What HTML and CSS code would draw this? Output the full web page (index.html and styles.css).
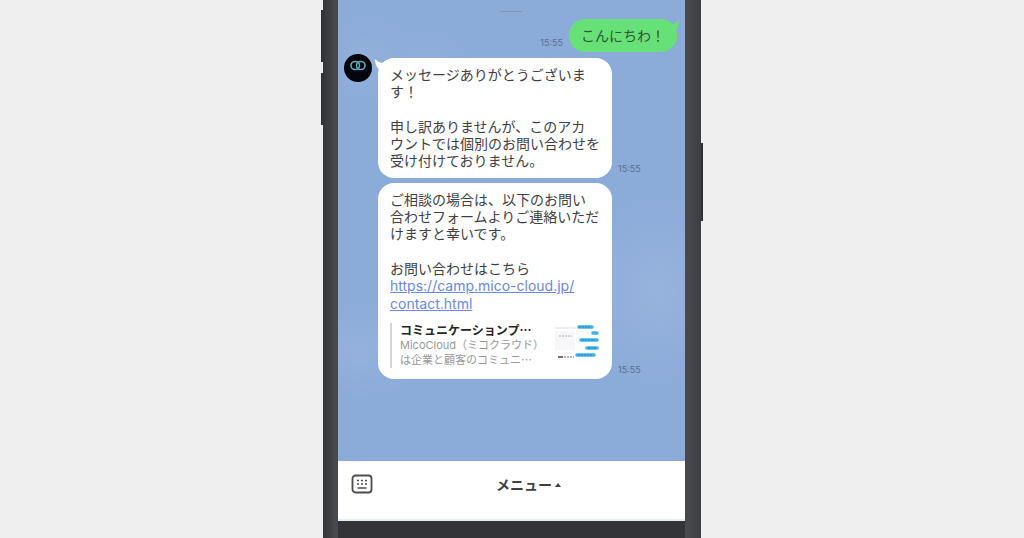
FILE: index.html
```html
<!DOCTYPE html>
<html lang="ja">
<head>
  <meta charset="UTF-8">
  <meta name="viewport" content="width=device-width, initial-scale=1">
  <title>トーク</title>
  <link rel="stylesheet" href="styles.css">
</head>
<body>
  <div class="phone">
    <span class="side-key volume-up"></span>
    <span class="side-key volume-down"></span>
    <span class="side-key power"></span>

    <div class="screen">
      <main class="chat">
        <div class="handle"></div>

        <div class="row sent">
          <time class="time">15:55</time>
          <div class="bubble bubble-green">
            こんにちわ！
            <svg class="tail tail-right" viewBox="0 0 12 12" aria-hidden="true"><path d="M0 3C4 5 8 4 12 0C12 5 10 9 7 11Z" fill="#67e177"/></svg>
          </div>
        </div>

        <div class="received">
          <svg class="avatar" viewBox="0 0 28 28" aria-hidden="true">
            <circle cx="14" cy="14" r="14" fill="#02060c"/>
            <rect x="7" y="7.500" width="8.500" height="8" rx="4" fill="none" stroke="#5cacb9" stroke-width="1.600"/>
            <rect x="12.500" y="7.500" width="8.500" height="8" rx="4" fill="none" stroke="#5cacb9" stroke-width="1.600"/>
          </svg>
          <div class="messages">
            <div class="row">
              <div class="bubble">
                <svg class="tail tail-left" viewBox="0 0 12 12" aria-hidden="true"><path d="M12 3C8 5 4 4 0 0C0 5 2 9 5 11Z" fill="#fff"/></svg>
                <p>メッセージありがとうございま<br>す！</p>
                <p>申し訳ありませんが、このアカ<br>ウントでは個別のお問い合わせを<br>受け付けておりません。</p>
              </div>
              <time class="time">15:55</time>
            </div>

            <div class="row">
              <div class="bubble">
                <p>ご相談の場合は、以下のお問い<br>合わせフォームよりご連絡いただ<br>けますと幸いです。</p>
                <p>お問い合わせはこちら</p>
                <a class="link" href="https://camp.mico-cloud.jp/contact.html">https://camp.mico-cloud.jp/<br>contact.html</a>
                <div class="preview">
                  <div class="preview-text">
                    <div class="preview-title">コミュニケーションプ<span class="dots">…</span></div>
                    <div class="preview-desc">MicoCloud（ミコクラウド）<br>は企業と顧客のコミュニ<span class="dots">…</span></div>
                  </div>
                  <svg class="thumb" viewBox="0 0 46 40" aria-hidden="true">
                    <path d="M1 5H22M2 18H20M2 23H20" stroke="#ededf0" stroke-width="2"/>
                    <rect x="1" y="8" width="20" height="19" fill="#f7f7f9"/>
                    <path d="M5 13H18" stroke="#a9abb0" stroke-width="1" stroke-dasharray="2 1"/>
                    <path d="M4 34H9" stroke="#70757c" stroke-width="2"/>
                    <path d="M10 34H20" stroke="#b4b7bb" stroke-width="2" stroke-dasharray="2 1"/>
                    <g stroke="#3fb2ec" stroke-width="3.600" stroke-linecap="round">
                      <path d="M25 4H38M39 10H43M27 17H43M33 25H43M23 32H40"/>
                    </g>
                    <path d="M25 4H37M28 17H41M34 25H42M24 32H38" stroke="#1b83c0" stroke-width="1" stroke-dasharray="2 1"/>
                  </svg>
                </div>
              </div>
              <time class="time">15:55</time>
            </div>
          </div>
        </div>
      </main>

      <footer class="menu-bar">
        <button class="keyboard" type="button" aria-label="キーボード">
          <svg viewBox="0 0 22 20" aria-hidden="true">
            <rect x="1.500" y="1.500" width="19" height="17" rx="3" fill="none" stroke="#4c4c4c" stroke-width="1.800"/>
            <path d="M6 6.500H8M10 6.500H12M14 6.500H16M6 10H8M10 10H12M14 10H16M6.500 14H15.500" stroke="#4c4c4c" stroke-width="1.700"/>
          </svg>
        </button>
        <button class="menu" type="button">メニュー<span class="arrow"></span></button>
      </footer>
    </div>
  </div>
</body>
</html>
```
FILE: styles.css
```css
* {
  box-sizing: border-box;
}
body {
  margin: 0;
  background: #efefef;
  font-family: Inter, "Noto Sans CJK JP", sans-serif;
  font-size: 14px;
  line-height: 17px;
  color: #3f4043;
}
p {
  margin: 0;
}
p + p {
  margin-top: 18px;
}
button {
  border: none;
  padding: 0;
  background: none;
  color: inherit;
  font: inherit;
  cursor: pointer;
}

/* phone body */
.phone {
  position: relative;
  display: flex;
  width: 100%;
  max-width: 378px;
  min-height: 100vh;
  margin: 0 auto;
  padding: 0 16px 17px 15px;
  background: linear-gradient(90deg, #34363b, #47494e 12px, #47494e 366px, #3c3d42);
}
.phone::after {
  content: "";
  position: absolute;
  left: 15px;
  right: 16px;
  bottom: 0;
  height: 17px;
  background: #333438;
}
.side-key {
  position: absolute;
  width: 2px;
  height: 52px;
  background: #303136;
}
.volume-up {
  top: 10px;
  left: -2px;
}
.volume-down {
  top: 73px;
  left: -2px;
}
.power {
  top: 143px;
  right: -2px;
  height: 78px;
}
.screen {
  flex: 1;
  display: flex;
  flex-direction: column;
  min-width: 0;
}

/* talk area with faint clouds */
.chat {
  flex: 1;
  padding: 11px 8px 80px 6px;
  background:
    radial-gradient(ellipse 54px 46px at 30px 58px, rgba(255, 255, 255, 0.06), transparent),
    radial-gradient(ellipse 40px 36px at 92px 60px, rgba(255, 255, 255, 0.05), transparent),
    radial-gradient(ellipse 80px 100px at 320px 290px, rgba(255, 255, 255, 0.1), transparent),
    radial-gradient(ellipse 80px 50px at 20px 350px, rgba(255, 255, 255, 0.08), transparent),
    #8babd9;
}
.handle {
  width: 22px;
  height: 1px;
  margin: 0 auto;
  background: #7c94b9;
}
.row {
  display: flex;
  align-items: flex-end;
  gap: 6px;
}
.sent {
  justify-content: flex-end;
  margin-top: 7px;
}
.time {
  padding-bottom: 1px;
  font-size: 9px;
  line-height: 16px;
  color: #5b6f90;
}
.received {
  display: flex;
  gap: 6px;
  margin-top: 6px;
}
.avatar {
  flex: none;
  width: 28px;
  height: 28px;
  margin-top: -4px;
}
.messages {
  display: flex;
  flex-direction: column;
  gap: 5px;
}
.bubble {
  position: relative;
  width: 234px;
  padding: 8px 12px 9px;
  border-radius: 16px;
  background: #fff;
}
.bubble-green {
  width: auto;
  padding: 8px 12px;
  background: #67e177;
  color: #2b5738;
}
.tail {
  position: absolute;
  width: 12px;
  height: 12px;
}
.tail-left {
  top: 1px;
  left: -3px;
}
.tail-right {
  top: 1px;
  right: -2px;
}
.link {
  display: block;
  line-height: 18px;
  color: #6b87e8;
}

/* link preview */
.preview {
  display: flex;
  justify-content: space-between;
  margin-top: 10px;
  padding-bottom: 2px;
}
.preview-text {
  padding-left: 8px;
  border-left: 2px solid #d5d5d7;
  line-height: 15px;
  white-space: nowrap;
}
.preview-title {
  font-size: 12px;
  font-weight: bold;
  color: #252525;
}
.preview-desc {
  font-size: 11px;
  color: #98999b;
}
.dots {
  font-family: "Noto Sans CJK JP", sans-serif;
  line-height: 1;
}
.thumb {
  flex: none;
  width: 46px;
  height: 40px;
}

/* bottom menu */
.menu-bar {
  display: flex;
  align-items: flex-start;
  height: 60px;
  padding: 12px 0 12px 13px;
  border-bottom: 2px solid #e4edf2;
  background: #fff;
}
.keyboard {
  flex: none;
  width: 22px;
  height: 22px;
}
.keyboard svg {
  display: block;
  width: 22px;
  height: 22px;
}
.menu {
  flex: 1;
  display: flex;
  justify-content: center;
  align-items: center;
  gap: 3px;
  padding-right: 1px;
  line-height: 24px;
  font-weight: bold;
}
.arrow {
  border: 3px solid transparent;
  border-top: none;
  border-bottom: 4px solid #3f4043;
}
```
